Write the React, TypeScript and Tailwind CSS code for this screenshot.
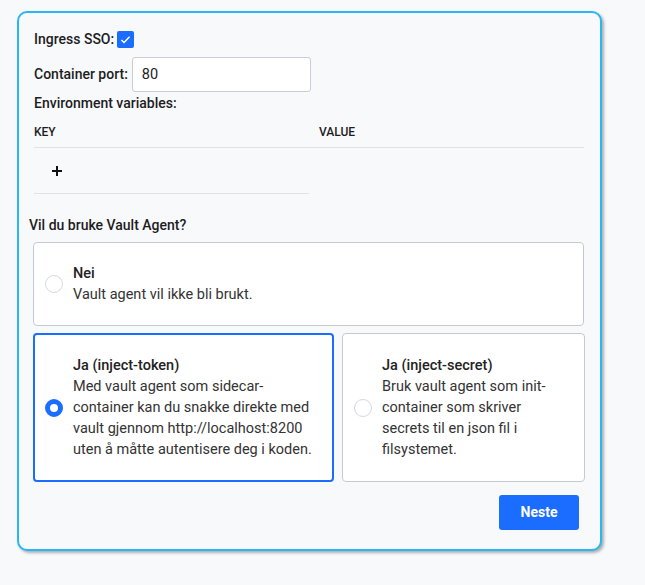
import { useState } from "react";

type Choice = "nei" | "token" | "secret";

function Radio({ checked }: { checked: boolean }) {
  return checked ? (
    <span className="block h-[18px] w-[18px] shrink-0 rounded-full border-[5px] border-[#1a6dff] bg-white" />
  ) : (
    <span className="block h-[18px] w-[18px] shrink-0 rounded-full border border-[#d5d9df] bg-white" />
  );
}

function Option({
  checked,
  title,
  text,
  onClick,
}: {
  checked: boolean;
  title: string;
  text: string;
  onClick: () => void;
}) {
  return (
    <button
      type="button"
      onClick={onClick}
      className={
        checked
          ? "flex items-center gap-[10px] rounded-[4px] border-2 border-[#1a6dff] bg-white py-5 pl-[10px] pr-[18px] text-left"
          : "flex items-center gap-[10px] rounded-[4px] border border-[#c5cad2] bg-white py-5 pl-[11px] pr-[19px] text-left"
      }
    >
      <Radio checked={checked} />
      <div className="text-[14.5px] leading-[21px]">
        <div className="font-medium text-[#222]">{title}</div>
        <div className="text-[#333]">{text}</div>
      </div>
    </button>
  );
}

export default function App() {
  const [choice, setChoice] = useState<Choice>("token");
  const [sso, setSso] = useState(true);

  return (
    <div className="min-h-screen bg-[#f8f9fb] pl-[17px] pt-[11px] font-['Roboto',sans-serif] text-[#1d1d1f]">
      <div className="w-[585px] rounded-[10px] border-2 border-[#29b6f6] bg-[#f8f9fb] pb-[19px] pl-[15px] pr-4 pt-[16px] shadow-[2px_2px_3px_rgba(0,0,0,0.3)]">
        {/* Ingress SSO */}
        <div className="flex h-5 items-center gap-[3px] text-[14px] font-medium">
          <span>Ingress SSO:</span>
          <button
            type="button"
            onClick={() => setSso(!sso)}
            className="flex h-[17px] w-[17px] items-center justify-center rounded-[2px] bg-[#1a6dff]"
          >
            {sso && (
              <svg width="13" height="13" viewBox="0 0 16 16" fill="none">
                <path d="M3 8.5l3.2 3.2L13 4.5" stroke="white" strokeWidth="1.8" />
              </svg>
            )}
          </button>
        </div>

        {/* Container port */}
        <div className="mt-[8px] flex items-center gap-[4px] text-[14px] font-medium">
          <span>Container port:</span>
          <input
            defaultValue="80"
            className="h-[35px] w-[179px] rounded-[3px] border border-[#c9cdd4] bg-white px-[9px] text-[14.5px] font-normal text-[#222] outline-none"
          />
        </div>

        <div className="mt-[1px] text-[14px] font-medium leading-5">Environment variables:</div>

        {/* Env table */}
        <div className="mt-[8px] grid grid-cols-[275px_1fr] text-[12px] font-medium leading-4">
          <div className="border-b border-[#dfe2e6] pb-[7px] pt-[3px]">KEY</div>
          <div className="border-b border-[#dfe2e6] pb-[7px] pl-[10px] pt-[3px]">VALUE</div>
          <div className="flex h-[46px] items-center border-b border-[#dfe2e6] pl-[17px]">
            <svg width="12" height="12" viewBox="0 0 12 12">
              <path d="M6 1v10M1 6h10" stroke="#111" strokeWidth="2" />
            </svg>
          </div>
          <div />
        </div>

        {/* Vault agent */}
        <div className="-ml-[5px] mt-[21px] text-[14px] font-medium leading-5">Vil du bruke Vault Agent?</div>

        <div className="-ml-px mt-[7px] flex flex-col gap-[7px]">
          <Option
            checked={choice === "nei"}
            onClick={() => setChoice("nei")}
            title="Nei"
            text="Vault agent vil ikke bli brukt."
          />
          <div className="grid grid-cols-[301px_243px] gap-2">
            <Option
              checked={choice === "token"}
              onClick={() => setChoice("token")}
              title="Ja (inject-token)"
              text="Med vault agent som sidecar-container kan du snakke direkte med vault gjennom http://localhost:8200 uten å måtte autentisere deg i koden."
            />
            <Option
              checked={choice === "secret"}
              onClick={() => setChoice("secret")}
              title="Ja (inject-secret)"
              text="Bruk vault agent som init-container som skriver secrets til en json fil i filsystemet."
            />
          </div>
        </div>

        <div className="mt-[13px] flex justify-end pr-[5px]">
          <button
            type="button"
            className="h-[35px] w-[80px] rounded-[3px] bg-[#1a6dff] text-[14px] font-bold text-white"
          >
            Neste
          </button>
        </div>
      </div>
    </div>
  );
}
